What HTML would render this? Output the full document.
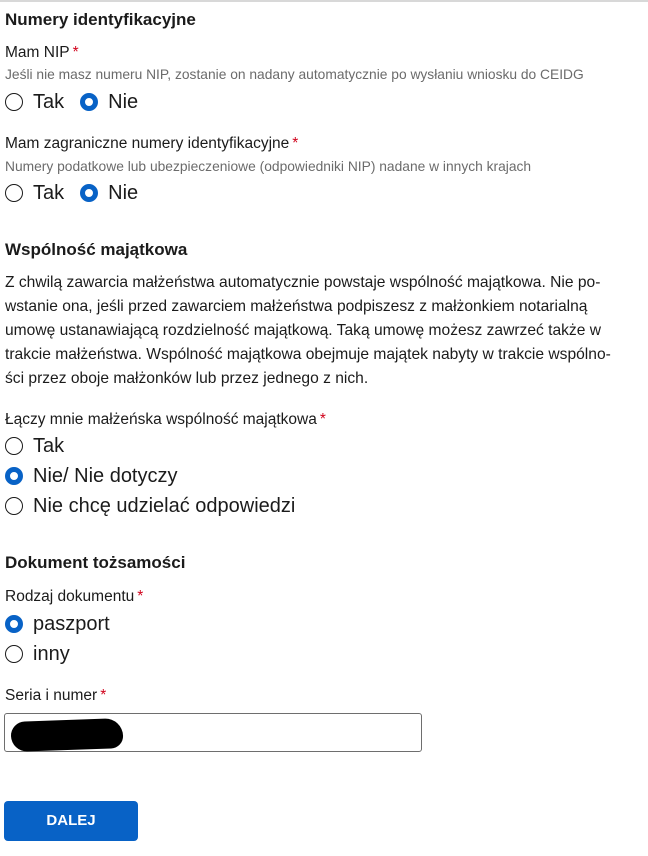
<!DOCTYPE html>
<html><head><meta charset="utf-8"><style>
*{margin:0;padding:0;box-sizing:border-box}
body{width:648px;height:856px;background:#fff;font-family:"Liberation Sans",Arial,sans-serif;color:#1b1b1b;position:relative;overflow:hidden}
.a{position:absolute;left:5px;white-space:nowrap}
.h{font-weight:bold;font-size:17px;line-height:20px}
.l{font-size:15.5px;line-height:18px}
.s{color:#d0021b;margin-left:3px}
.help{font-size:13.8px;line-height:16px;color:#6b6b6b}
.r{font-size:20px;line-height:22px;display:flex;align-items:center}
.c{width:18px;height:18px;border-radius:50%;border:1.5px solid #1b1b1b;margin-right:10px;flex:none}
.c.on{border:5.5px solid #0862c6;background:#fff}
.p{font-size:15.6px;line-height:24px;color:#1b1b1b}
</style></head><body>
<div style="position:absolute;left:0;top:0;width:648px;height:2px;background:#d8d8d8"></div>
<div class="a h" style="top:10px">Numery identyfikacyjne</div>
<div class="a l" style="top:44px">Mam NIP<span class="s">*</span></div>
<div class="a help" style="top:67px">Jeśli nie masz numeru NIP, zostanie on nadany automatycznie po wysłaniu wniosku do CEIDG</div>
<div class="a r" style="top:91px"><span class="c"></span>Tak<span class="c on" style="margin-left:16px"></span>Nie</div>
<div class="a l" style="top:135px">Mam zagraniczne numery identyfikacyjne<span class="s">*</span></div>
<div class="a help" style="top:159px">Numery podatkowe lub ubezpieczeniowe (odpowiedniki NIP) nadane w innych krajach</div>
<div class="a r" style="top:182px"><span class="c"></span>Tak<span class="c on" style="margin-left:16px"></span>Nie</div>
<div class="a h" style="top:240px">Wspólność majątkowa</div>
<div class="a p" style="top:271px">Z chwilą zawarcia małżeństwa automatycznie powstaje wspólność majątkowa. Nie po-<br>wstanie ona, jeśli przed zawarciem małżeństwa podpiszesz z małżonkiem notarialną<br>umowę ustanawiającą rozdzielność majątkową. Taką umowę możesz zawrzeć także w<br>trakcie małżeństwa. Wspólność majątkowa obejmuje majątek nabyty w trakcie wspólno-<br>ści przez oboje małżonków lub przez jednego z nich.</div>
<div class="a l" style="top:411px">Łączy mnie małżeńska wspólność majątkowa<span class="s">*</span></div>
<div class="a r" style="top:435px"><span class="c"></span>Tak</div>
<div class="a r" style="top:465px"><span class="c on"></span>Nie/ Nie dotyczy</div>
<div class="a r" style="top:495px"><span class="c"></span>Nie chcę udzielać odpowiedzi</div>
<div class="a h" style="top:553px">Dokument tożsamości</div>
<div class="a l" style="top:588px">Rodzaj dokumentu<span class="s">*</span></div>
<div class="a r" style="top:613px"><span class="c on"></span>paszport</div>
<div class="a r" style="top:643px"><span class="c"></span>inny</div>
<div class="a l" style="top:687px">Seria i numer<span class="s">*</span></div>
<div style="position:absolute;left:4px;top:713px;width:418px;height:39px;border:1px solid #6e6e6e;border-radius:3px"></div>
<div style="position:absolute;left:11px;top:720px;width:112px;height:30px;background:#000;border-radius:16px 20px 14px 18px;transform:rotate(-2deg)"></div>
<div style="position:absolute;left:4px;top:801px;width:134px;height:40px;background:#0862c6;border-radius:4px;color:#fff;font-weight:bold;font-size:15px;line-height:40px;text-align:center">DALEJ</div>
</body></html>
